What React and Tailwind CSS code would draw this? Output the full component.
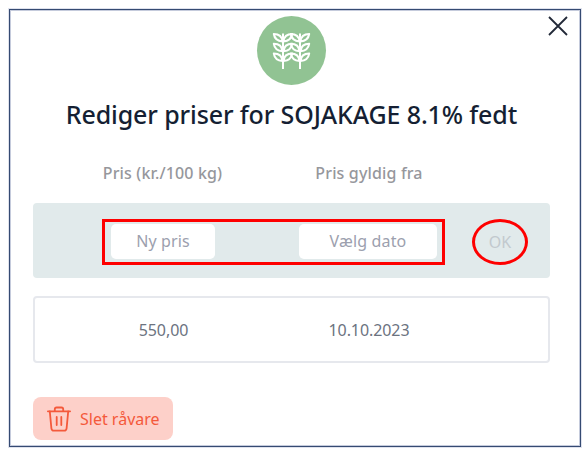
function WheatIcon() {
  const stalk = (
    <>
      <path d="M0 2V37.500" />
      <path d="M-.5 10C-5.500 9.500-8.500 7-9.200 2.500C-4.500 2.500-1 4.500-.5 10Z" />
      <path d="M.5 10C5.500 9.500 8.500 7 9.200 2.500C4.500 2.500 1 4.500 .5 10Z" />
      <path d="M-.5 19.800C-5.500 19.300-8.500 16.800-9.200 12.300C-4.500 12.300-1 14.300-.5 19.800Z" />
      <path d="M.5 19.800C5.500 19.300 8.500 16.800 9.200 12.300C4.500 12.300 1 14.300 .5 19.800Z" />
      <path d="M-.5 29.600C-5.500 29.100-8.500 26.600-9.200 22.100C-4.500 22.100-1 24.100-.5 29.600Z" />
      <path d="M.5 29.600C5.500 29.100 8.500 26.600 9.200 22.100C4.500 22.100 1 24.100 .5 29.600Z" />
    </>
  );
  return (
    <svg width="69" height="69" viewBox="0 0 69 69" fill="none" stroke="#fff" strokeWidth="2" strokeLinejoin="round">
      <g transform="translate(26 15.500)">{stalk}</g>
      <g transform="translate(43 15.500)">{stalk}</g>
    </svg>
  );
}

function TrashIcon() {
  return (
    <svg className="shrink-0" width="24" height="26" viewBox="0 0 24 26" fill="none" stroke="#f4593b" strokeWidth="1.8" strokeLinecap="round" strokeLinejoin="round">
      <path d="M.9 5.300H23.100" />
      <path d="M7.800 5V3.200Q7.800 1.500 9.500 1.500H14.500Q16.200 1.500 16.200 3.200V5" />
      <path d="M2.800 5.500L4.400 22.300Q4.700 24.600 6.800 24.600H17.200Q19.300 24.600 19.600 22.300L21.200 5.500" />
      <path d="M9.700 11V19M14.300 11V19" />
    </svg>
  );
}

export default function App() {
  return (
    <div className="h-[459px] w-[588px] overflow-hidden bg-white pt-[9px] pl-[9px] font-['Noto_Sans','Open_Sans',sans-serif]">
      <main className="relative h-[438px] w-[572px] border border-[#354a72] pr-[30px] pl-[23px] shadow-[0_0_0_1px_#dfe2ed,inset_0_0_0_1px_#c5cbdc]">
        <button aria-label="Luk" className="absolute top-[6px] right-[12px] h-[20px] w-[20px]">
          <svg width="20" height="20" viewBox="0 0 20 20" stroke="#222938" strokeWidth="1.8">
            <path d="M1 1L19 19M19 1L1 19" />
          </svg>
        </button>
        <div className="mt-[6px] ml-[224px] h-[69px] w-[69px] rounded-full bg-[#91c393]">
          <WheatIcon />
        </div>
        <h1 className="mt-[14px] flex h-8 items-center justify-center text-[25px] font-medium tracking-[-0.120px] whitespace-nowrap text-[#151f33]">
          Rediger priser for SOJAKAGE 8.1% fedt
        </h1>
        <div className="mt-[30px] flex h-6 items-center text-[16px] font-medium tracking-[0.150px] whitespace-nowrap text-[#96979c]">
          <span className="w-[259px] text-center">Pris (kr./100 kg)</span>
          <span className="w-[154px] text-center">Pris gyldig fra</span>
        </div>
        <section className="mt-[18px] flex h-[75px] items-center rounded bg-[#e1eaeb] pl-[69px] text-[16px] whitespace-nowrap text-[#9ca0ae]">
          <div className="mt-[2px] flex h-[46px] w-[343px] shrink-0 items-center justify-between border-3 border-[#fe0000] pr-[5px] pl-[6px]">
            <div className="mb-px flex h-[35px] w-[104px] items-center justify-center rounded-[5px] bg-white tracking-[0.120px]">Ny pris</div>
            <div className="mb-px flex h-[35px] w-[138px] items-center justify-center rounded-[5px] bg-white tracking-[0.150px]">Vælg dato</div>
          </div>
          <div className="mt-[2px] ml-[27px] flex h-[46px] w-[56px] items-center justify-center rounded-[50%] border-3 border-[#fe0000] text-[#c2c9ce]"><span>OK</span></div>
        </section>
        <section className="mt-[18px] flex h-[67px] items-center rounded border-2 border-[#e6e8ed] text-[16px] tracking-[-0.080px] whitespace-nowrap text-[#6c737f]">
          <span className="w-[257px] text-center">550,00</span>
          <span className="w-[154px] text-center">10.10.2023</span>
        </section>
        <button className="mt-[34px] flex h-[43px] w-[140px] items-center rounded-lg bg-[#fdd0c9] pl-[14px] text-[16px] whitespace-nowrap text-[#f4593b]">
          <TrashIcon />
          <span className="ml-[9px]">Slet råvare</span>
        </button>
      </main>
    </div>
  );
}
